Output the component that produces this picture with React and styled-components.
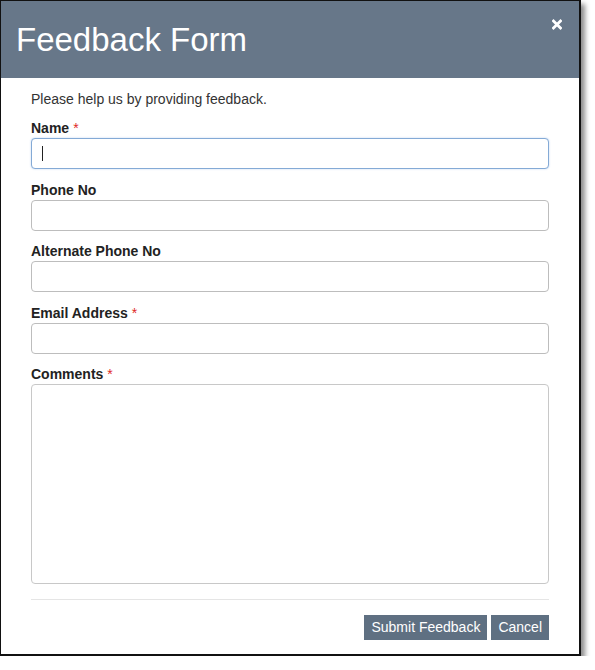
import styled, { createGlobalStyle } from 'styled-components';

const GlobalStyle = createGlobalStyle`
  body {
    margin: 0;
    background: #fff;
    font-family: "Liberation Sans", Arial, sans-serif;
  }
`;

const fields = [
  { id: 'name', label: 'Name', required: true, focused: true },
  { id: 'phone', label: 'Phone No' },
  { id: 'altPhone', label: 'Alternate Phone No' },
  { id: 'email', label: 'Email Address', required: true },
];

function App() {
  return (
    <>
      <GlobalStyle />
      <Dialog>
        <Header>
          <Title>Feedback Form</Title>
          <CloseButton aria-label="Close">
            <svg width="10" height="11" viewBox="0 0 10 11">
              <path d="M1.5 2 L8.5 9 M8.5 2 L1.5 9" stroke="#fff" strokeWidth="2.8" strokeLinecap="square" />
            </svg>
          </CloseButton>
        </Header>
        <Body>
          <Intro>Please help us by providing feedback.</Intro>
          {fields.map((f) => (
            <Field key={f.id}>
              <Label htmlFor={f.id}>
                {f.label}
                {f.required && <Star>*</Star>}
              </Label>
              <InputWrap>
                <Input id={f.id} type="text" $focused={f.focused} />
                {f.focused && <Caret />}
              </InputWrap>
            </Field>
          ))}
          <Field>
            <Label htmlFor="comments">
              Comments<Star>*</Star>
            </Label>
            <TextArea id="comments" />
          </Field>
        </Body>
        <Footer>
          <Button>Submit Feedback</Button>
          <Button>Cancel</Button>
        </Footer>
      </Dialog>
    </>
  );
}
export default App;

const Dialog = styled.div`
  width: 578px;
  border: 1px solid #111;
  border-right-width: 2px;
  border-bottom-width: 2px;
  background: #fff;
  box-shadow: 4px 4px 5px rgba(0, 0, 0, 0.45);
`;

const Header = styled.div`
  height: 77px;
  background: #677789;
  display: flex;
  align-items: flex-start;
  justify-content: space-between;
  padding: 0 17px 0 15px;
`;

const Title = styled.h1`
  margin: 0;
  padding-top: 19px;
  font-size: 33px;
  font-weight: normal;
  line-height: 40px;
  color: #fff;
`;

const CloseButton = styled.button`
  border: none;
  background: none;
  padding: 0;
  margin-top: 18px;
  display: flex;
  cursor: pointer;
`;

const Body = styled.div`
  padding: 13px 30px 0 30px;
`;

const Intro = styled.p`
  margin: 0 0 13px;
  font-size: 14px;
  line-height: 16px;
  color: #333;
`;

const Field = styled.div`
  margin-bottom: 12.5px;
`;

const Label = styled.label`
  display: block;
  font-size: 14px;
  font-weight: bold;
  line-height: 16px;
  color: #222;
  margin-bottom: 2px;
`;

const Star = styled.span`
  color: #e02828;
  margin-left: 4px;
  font-weight: normal;
`;

const InputWrap = styled.div`
  position: relative;
`;

const Input = styled.input`
  display: block;
  box-sizing: border-box;
  width: 100%;
  height: 31px;
  border: 1px solid ${(p) => (p.$focused ? '#84aad6' : '#bdbdbd')};
  border-radius: 4px;
  box-shadow: ${(p) => (p.$focused ? '0 0 2px rgba(102, 153, 220, 0.45)' : 'none')};
  outline: none;
  caret-color: transparent;
  font-family: inherit;
  font-size: 14px;
  padding: 0 10px;
`;

const Caret = styled.span`
  position: absolute;
  left: 11px;
  top: 8px;
  width: 1px;
  height: 15px;
  background: #222;
`;

const TextArea = styled.textarea`
  display: block;
  box-sizing: border-box;
  width: 100%;
  height: 200px;
  border: 1px solid #c8c8c8;
  border-radius: 4px;
  resize: none;
  outline: none;
  font-family: inherit;
`;

const Footer = styled.div`
  margin: 15px 30px 0 30px;
  border-top: 1px solid #e5e5e5;
  padding: 15px 0 14px;
  display: flex;
  justify-content: flex-end;
  gap: 4px;
`;

const Button = styled.button`
  height: 25px;
  padding: 0 7px;
  border: none;
  border-radius: 0;
  background: #5f7082;
  color: #fff;
  font-family: inherit;
  font-size: 14px;
  line-height: 25px;
  cursor: pointer;
`;
